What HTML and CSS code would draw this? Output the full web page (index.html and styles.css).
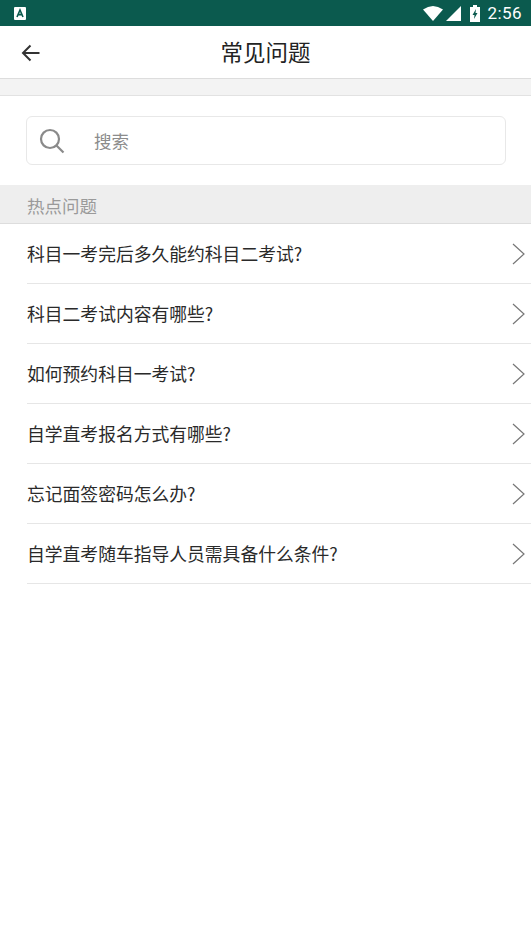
FILE: index.html
```html
<!DOCTYPE html>
<html lang="zh">
<head>
<meta charset="utf-8">
<title>常见问题</title>
<link rel="stylesheet" href="styles.css">
</head>
<body>
<div class="status">
  <svg class="app-icon" width="12" height="13" viewBox="0 0 12 13"><rect width="12" height="13" rx="1" fill="#fff"/><path d="M3 10 6 3l3 7M4.200 7.600h3.600" fill="none" stroke="#0b5a4e" stroke-width="1.600"/></svg>
  <div class="status-right">
    <svg width="20" height="15" viewBox="0 0 20 15"><path d="M0 3.500Q10-3.500 20 3.500L10 15Z" fill="#fff"/></svg>
    <svg class="sig" width="15" height="15" viewBox="0 0 15 15"><path d="M0 15 15 0V15Z" fill="#fff"/></svg>
    <svg class="bat" width="10" height="17" viewBox="0 0 10 17"><path d="M3 0h4v2h3v15H0V2h3Z" fill="#fff"/><path d="M6 4 2.500 10h2L4 14l3.500-6h-2Z" fill="#0b5a4e"/></svg>
    <span class="time">2:56</span>
  </div>
</div>
<header class="bar">
  <svg class="back" width="20" height="20" viewBox="0 0 20 20"><path d="M18.500 10H3M9.500 2.500 2 10l7.500 7.500" fill="none" stroke="#333" stroke-width="2"/></svg>
  <h1>常见问题</h1>
</header>
<div class="band"></div>
<div class="search-wrap">
  <div class="search">
    <svg width="26" height="26" viewBox="0 0 26 26"><circle cx="11" cy="11" r="9" fill="none" stroke="#8a8a8a" stroke-width="2.200"/><path d="M17.500 17.500 24.500 24.500" stroke="#8a8a8a" stroke-width="2.200"/></svg>
    <span>搜索</span>
  </div>
</div>
<div class="section">热点问题</div>
<ul class="list">
  <li><span>科目一考完后多久能约科目二考试?</span><svg width="13" height="22" viewBox="0 0 13 22"><path d="M1 1 12 11 1 21" fill="none" stroke="#777" stroke-width="1.200"/></svg></li>
  <li><span>科目二考试内容有哪些?</span><svg width="13" height="22" viewBox="0 0 13 22"><path d="M1 1 12 11 1 21" fill="none" stroke="#777" stroke-width="1.200"/></svg></li>
  <li><span>如何预约科目一考试?</span><svg width="13" height="22" viewBox="0 0 13 22"><path d="M1 1 12 11 1 21" fill="none" stroke="#777" stroke-width="1.200"/></svg></li>
  <li><span>自学直考报名方式有哪些?</span><svg width="13" height="22" viewBox="0 0 13 22"><path d="M1 1 12 11 1 21" fill="none" stroke="#777" stroke-width="1.200"/></svg></li>
  <li><span>忘记面签密码怎么办?</span><svg width="13" height="22" viewBox="0 0 13 22"><path d="M1 1 12 11 1 21" fill="none" stroke="#777" stroke-width="1.200"/></svg></li>
  <li><span>自学直考随车指导人员需具备什么条件?</span><svg width="13" height="22" viewBox="0 0 13 22"><path d="M1 1 12 11 1 21" fill="none" stroke="#777" stroke-width="1.200"/></svg></li>
</ul>
</body>
</html>
```
FILE: styles.css
```css
* { box-sizing: border-box; }
html, body { margin: 0; padding: 0; }
body { width: 531px; height: 947px; overflow: hidden; background: #fff; font-family: "Noto Sans CJK SC", "Noto Sans", sans-serif; }
svg { display: block; flex: none; }
.status { height: 26px; background: #0b5a4e; display: flex; align-items: center; justify-content: space-between; padding: 0 9px 0 14px; }
.status-right { display: flex; align-items: center; }
.sig { margin-left: 3px; }
.bat { margin-left: 9px; }
.time { margin-left: 8px; color: #fff; font: 17px/26px Roboto, sans-serif; letter-spacing: .4px; }
.bar { height: 52px; position: relative; display: flex; align-items: center; justify-content: center; padding-bottom: 3px; }
.back { position: absolute; left: 21px; top: 17px; }
.bar h1 { margin: 0; font-size: 22.500px; font-weight: 400; color: #222; }
.band { height: 18px; background: #f3f3f3; border-top: 1px solid #ddd; border-bottom: 1px solid #e2e2e2; }
.search-wrap { height: 89px; padding: 20px 25px 0 26px; }
.search { height: 49px; border: 1px solid #e8e8e8; border-radius: 6px; display: flex; align-items: center; padding-left: 12px; color: #8c8c8c; font-size: 17.500px; }
.search span { margin-left: 29px; padding-bottom: 1px; }
.section { height: 39px; background: #eee; border-bottom: 1px solid #ddd; padding-left: 27px; color: #9a9a9a; font-size: 17.500px; line-height: 41px; }
.list { list-style: none; margin: 0; padding: 0 0 0 27px; }
.list li { height: 60px; border-bottom: 1px solid #e6e6e6; display: flex; align-items: center; justify-content: space-between; padding-right: 6px; color: #2a2a2a; font-size: 17.800px; }
.list li span { padding-bottom: 2px; }
```
